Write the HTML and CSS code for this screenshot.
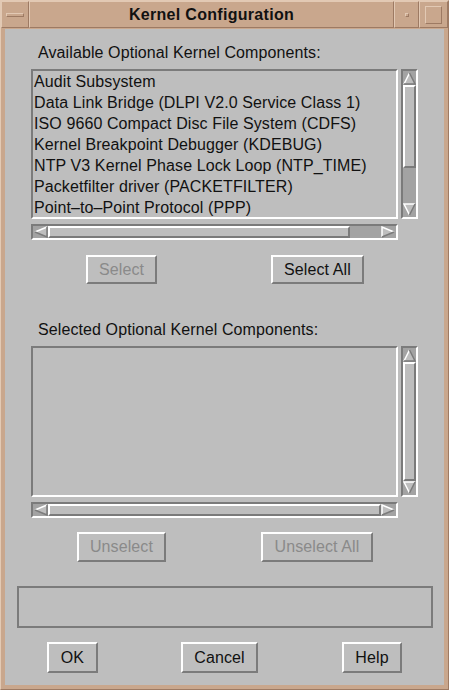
FILE: index.html
```html
<!DOCTYPE html>
<html lang="en">
<head>
    <meta charset="UTF-8">
    <title>Kernel Configuration</title>
    <link rel="stylesheet" href="styles.css">
</head>
<body>
    <div class="window">
        <div class="titlebar">
            <div class="tb-btn tb-menu"><span class="menu-bar"></span></div>
            <div class="tb-title">Kernel Configuration</div>
            <div class="tb-btn tb-min"><span class="min-dot"></span></div>
            <div class="tb-btn tb-max"><span class="max-box"></span></div>
        </div>

        <div class="client">
            <div class="label">Available Optional Kernel Components:</div>
            <div class="scrolled">
                <div class="scrolled-row">
                    <div class="list">
                        <div class="item">Audit Subsystem</div>
                        <div class="item">Data Link Bridge (DLPI V2.0 Service Class 1)</div>
                        <div class="item">ISO 9660 Compact Disc File System (CDFS)</div>
                        <div class="item">Kernel Breakpoint Debugger (KDEBUG)</div>
                        <div class="item">NTP V3 Kernel Phase Lock Loop (NTP_TIME)</div>
                        <div class="item">Packetfilter driver (PACKETFILTER)</div>
                        <div class="item">Point&#8211;to&#8211;Point Protocol (PPP)</div>
                    </div>
                    <div class="vscroll">
                        <svg class="arrow" width="13" height="13" viewBox="0 0 13 13"><polygon points="6.5,1 12,12 1,12" fill="#bebebe"/><path d="M6.5 1 L1 12" stroke="#fff" stroke-width="1.5"/><path d="M6.5 1 L12 12 L1 12" stroke="#7b7b7b" stroke-width="1.5" fill="none"/></svg>
                        <div class="vthumb thumb-top"></div>
                        <div class="trough"></div>
                        <svg class="arrow" width="13" height="13" viewBox="0 0 13 13"><polygon points="1,1 12,1 6.5,12" fill="#bebebe"/><path d="M12 1 L1 1 L6.5 12" stroke="#fff" stroke-width="1.5" fill="none"/><path d="M12 1 L6.5 12" stroke="#7b7b7b" stroke-width="1.5"/></svg>
                    </div>
                </div>
                <div class="hscroll">
                    <svg class="arrow" width="14" height="12" viewBox="0 0 14 12"><polygon points="1,6 13,1 13,11" fill="#bebebe"/><path d="M13 1 L1 6" stroke="#fff" stroke-width="1.5"/><path d="M1 6 L13 11 L13 1" stroke="#7b7b7b" stroke-width="1.5" fill="none"/></svg>
                    <div class="hthumb thumb-wide"></div>
                    <div class="trough"></div>
                    <svg class="arrow" width="14" height="12" viewBox="0 0 14 12"><polygon points="1,1 13,6 1,11" fill="#bebebe"/><path d="M1 11 L1 1 L13 6" stroke="#fff" stroke-width="1.5" fill="none"/><path d="M13 6 L1 11" stroke="#7b7b7b" stroke-width="1.5"/></svg>
                </div>
            </div>

            <div class="btn-row row-select">
                <button class="btn btn-select" disabled>Select</button>
                <button class="btn btn-select-all">Select All</button>
            </div>

            <div class="label label-second">Selected Optional Kernel Components:</div>
            <div class="scrolled">
                <div class="scrolled-row">
                    <div class="list list-empty"></div>
                    <div class="vscroll">
                        <svg class="arrow" width="13" height="13" viewBox="0 0 13 13"><polygon points="6.5,1 12,12 1,12" fill="#bebebe"/><path d="M6.5 1 L1 12" stroke="#fff" stroke-width="1.5"/><path d="M6.5 1 L12 12 L1 12" stroke="#7b7b7b" stroke-width="1.5" fill="none"/></svg>
                        <div class="vthumb thumb-full"></div>
                        <svg class="arrow" width="13" height="13" viewBox="0 0 13 13"><polygon points="1,1 12,1 6.5,12" fill="#bebebe"/><path d="M12 1 L1 1 L6.5 12" stroke="#fff" stroke-width="1.5" fill="none"/><path d="M12 1 L6.5 12" stroke="#7b7b7b" stroke-width="1.5"/></svg>
                    </div>
                </div>
                <div class="hscroll">
                    <svg class="arrow" width="14" height="12" viewBox="0 0 14 12"><polygon points="1,6 13,1 13,11" fill="#bebebe"/><path d="M13 1 L1 6" stroke="#fff" stroke-width="1.5"/><path d="M1 6 L13 11 L13 1" stroke="#7b7b7b" stroke-width="1.5" fill="none"/></svg>
                    <div class="hthumb thumb-full"></div>
                    <svg class="arrow" width="14" height="12" viewBox="0 0 14 12"><polygon points="1,1 13,6 1,11" fill="#bebebe"/><path d="M1 11 L1 1 L13 6" stroke="#fff" stroke-width="1.5" fill="none"/><path d="M13 6 L1 11" stroke="#7b7b7b" stroke-width="1.5"/></svg>
                </div>
            </div>

            <div class="btn-row row-unselect">
                <button class="btn btn-unselect" disabled>Unselect</button>
                <button class="btn btn-unselect-all" disabled>Unselect All</button>
            </div>

            <div class="status"></div>

            <div class="btn-row row-dialog">
                <button class="btn btn-ok">OK</button>
                <button class="btn btn-cancel">Cancel</button>
                <button class="btn btn-help">Help</button>
            </div>
        </div>
    </div>
</body>
</html>
```

FILE: styles.css
```css
body {
    margin: 0;
    background-color: #c9a78d;
    font-family: "Liberation Sans", Arial, sans-serif;
}

.window {
    width: 449px;
    height: 690px;
    box-sizing: border-box;
    display: flex;
    flex-direction: column;
    background-color: #c9a78d;
    border: 1px solid;
    border-color: #e2c9b4 #9d7a63 #9d7a63 #e2c9b4;
}

/* title bar */

.titlebar {
    height: 27px;
    display: flex;
}

.tb-btn, .tb-title {
    box-sizing: border-box;
    border: 1px solid;
    border-color: #e2c9b4 #9d7a63 #9d7a63 #e2c9b4;
    display: flex;
    align-items: center;
    justify-content: center;
}

.tb-menu {
    width: 28px;
}

.menu-bar {
    width: 16px;
    height: 2px;
    border: 1px solid;
    border-color: #e2c9b4 #9d7a63 #9d7a63 #e2c9b4;
}

.tb-title {
    flex: 1;
    font-weight: bold;
    font-size: 16px;
    letter-spacing: 0.3px;
    color: #111;
    padding-top: 1px;
}

.tb-min {
    width: 25px;
}

.min-dot {
    width: 2px;
    height: 2px;
    border: 1px solid;
    border-color: #e2c9b4 #9d7a63 #9d7a63 #e2c9b4;
}

.tb-max {
    width: 29px;
}

.max-box {
    width: 15px;
    height: 16px;
    border: 1px solid;
    border-color: #e2c9b4 #9d7a63 #9d7a63 #e2c9b4;
}

/* client area */

.client {
    flex: 1;
    margin: 1px 4px 4px 4px;
    background-color: #bebebe;
    padding-top: 15px;
    font-size: 16px;
    letter-spacing: 0.1px;
    color: #111;
}

.label {
    margin-left: 33px;
    line-height: 17px;
}

.label-second {
    margin-top: 37px;
}

.scrolled {
    margin: 8px 0 0 26px;
    width: 387px;
}

.scrolled-row {
    display: flex;
    gap: 3px;
}

.list {
    width: 367px;
    height: 150px;
    box-sizing: border-box;
    border: 2px solid;
    border-color: #7b7b7b #fff #fff #7b7b7b;
    padding-left: 1px;
    overflow: hidden;
}

.list-empty {
    height: 151px;
}

.item {
    line-height: 21px;
    white-space: nowrap;
}

.vscroll {
    width: 17px;
    box-sizing: border-box;
    border: 2px solid;
    border-color: #7b7b7b #fff #fff #7b7b7b;
    background-color: #a3a3a3;
    display: flex;
    flex-direction: column;
    padding: 1px 0;
}

.arrow {
    display: block;
    flex-shrink: 0;
}

.vthumb, .hthumb {
    box-sizing: border-box;
    background-color: #bebebe;
    border: 2px solid;
    border-color: #fff #7b7b7b #7b7b7b #fff;
}

.thumb-top {
    height: 83px;
}

.trough {
    flex: 1;
}

.thumb-full {
    flex: 1;
}

.hscroll {
    width: 367px;
    height: 16px;
    margin-top: 5px;
    box-sizing: border-box;
    border: 2px solid;
    border-color: #7b7b7b #fff #fff #7b7b7b;
    background-color: #a3a3a3;
    display: flex;
    padding: 0 1px;
}

.thumb-wide {
    width: 302px;
}

/* push buttons */

.btn-row {
    display: flex;
}

.btn {
    box-sizing: border-box;
    font-family: "Liberation Sans", Arial, sans-serif;
    font-size: 16px;
    letter-spacing: 0.1px;
    color: #111;
    background-color: #bebebe;
    border: 2px solid;
    border-color: #fff #7b7b7b #7b7b7b #fff;
    padding: 0;
}

.btn:disabled {
    color: #8a8a8a;
}

.row-select {
    margin-top: 15px;
    padding-left: 81px;
    gap: 114px;
}

.row-select .btn {
    height: 29px;
}

.btn-select {
    width: 71px;
}

.btn-select-all {
    width: 93px;
}

.row-unselect {
    margin-top: 14px;
    padding-left: 72px;
    gap: 95px;
}

.row-unselect .btn {
    height: 30px;
}

.btn-unselect {
    width: 89px;
}

.btn-unselect-all {
    width: 112px;
}

.status {
    margin: 24px 0 0 12px;
    width: 416px;
    height: 42px;
    box-sizing: border-box;
    border: 2px solid #7b7b7b;
}

.row-dialog {
    margin-top: 14px;
    padding-left: 42px;
}

.row-dialog .btn {
    height: 31px;
}

.btn-ok {
    width: 51px;
}

.btn-cancel {
    width: 77px;
    margin-left: 83px;
}

.btn-help {
    width: 60px;
    margin-left: 84px;
}
```
